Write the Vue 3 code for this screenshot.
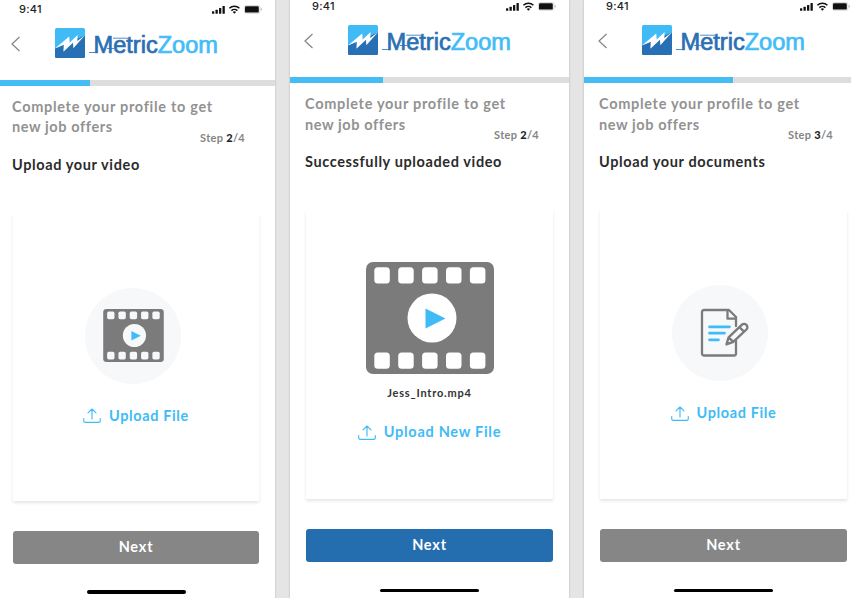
<script setup>
const screens = [
  { id: 'upload', step: 2, progress: 92.5, heading: 'Upload your video', kind: 'video', action: 'Upload File', ready: false },
  { id: 'uploaded', step: 2, progress: 93, heading: 'Successfully uploaded video', kind: 'preview', action: 'Upload New File', ready: true, file: 'Jess_Intro.mp4' },
  { id: 'documents', step: 3, progress: 149, heading: 'Upload your documents', kind: 'document', action: 'Upload File', ready: false },
]
const holes = [0, 1, 2, 3, 4]
</script>

<template>
  <main class="board">
    <section v-for="s in screens" :key="s.id" class="phone" :class="s.id">
      <div class="status">
        <span class="time">9:41</span>
        <svg class="signals" width="52" height="12" viewBox="0 0 52 12">
          <rect x="2" y="8.200" width="2.300" height="2.500" rx=".5" />
          <rect x="5.500" y="6.800" width="2.300" height="3.900" rx=".5" />
          <rect x="9" y="5" width="2.300" height="5.700" rx=".5" />
          <rect x="12.500" y="3" width="2.300" height="7.700" rx=".5" />
          <g fill="none" stroke="#111" stroke-width="1.500">
            <path d="M19.400 5.300a7.200 7.200 0 0 1 10 0" />
            <path d="M21.400 7.600a4.400 4.400 0 0 1 6 0" />
          </g>
          <path d="M22.700 9a2.600 2.600 0 0 1 3.400 0L24.400 10.700z" />
          <rect x="34.400" y="2.600" width="15.600" height="7.600" rx="2" fill="none" stroke="#bbb" stroke-width=".6" />
          <rect x="35" y="3.200" width="13.800" height="6.400" rx="1.200" />
          <path d="M50.800 5.100v2.600q1-.4 1-1.300t-1-1.300z" fill="#aaa" />
        </svg>
      </div>

      <header class="header">
        <svg class="back" width="10" height="16" viewBox="0 0 10 16">
          <path d="M8.500 1 1 8 8.500 15" fill="none" stroke="#858585" stroke-width="1.200" />
        </svg>
        <svg class="logo" width="166" height="32" viewBox="0 0 166 32">
          <rect x="0" y="1" width="30" height="30" rx="1.500" fill="#40bbf6" />
          <path d="M0 21.500 30 8.500V29.500a1.500 1.500 0 0 1-1.500 1.500H1.500A1.500 1.500 0 0 1 0 29.500z" fill="#2870b6" />
          <path d="M0 21.500 14.200 9.500 14.700 15.500 22.600 8 22.300 14 30 8.300 18.300 21.300 18 15.800 8.400 24.800 8.800 17.800z" fill="#fff" />
          <text class="word" x="38.500" y="25.800" textLength="124.500" lengthAdjust="spacingAndGlyphs"><tspan fill="#2b70b3" stroke="#2b70b3">Metric</tspan><tspan fill="#42bdf7" stroke="#42bdf7">Zoom</tspan></text>
          <path d="M34 25.500h7M58 11.200h15M52 21.500h7" stroke="#2b70b3" stroke-width=".8" />
        </svg>
      </header>

      <div class="track"><div class="bar" :style="{ width: s.progress + 'px' }"></div></div>

      <div class="intro">
        <p class="lead"><span class="l1">Complete your profile to get</span><br /><span class="l2">new job offers</span></p>
        <p class="step">Step <b>{{ s.step }}</b>/4</p>
      </div>
      <h1 class="heading">{{ s.heading }}</h1>

      <div class="card" :class="s.kind">
        <div class="art">
          <svg v-if="s.kind !== 'document'" class="film" viewBox="0 0 128 112">
            <rect width="128" height="112" rx="7" fill="#7b7b7b" />
            <g :fill="s.kind === 'video' ? '#f7f8fa' : '#fff'">
              <template v-for="n in holes" :key="n">
                <rect :x="8.300 + n * 23.900" y="5.300" width="15.500" height="16.200" rx="3.500" />
                <rect :x="8.300 + n * 23.900" y="90.500" width="15.500" height="16.200" rx="3.500" />
              </template>
              <circle cx="66" cy="56" r="24.500" />
            </g>
            <path d="M59.500 46.500v20L79.500 56.500z" fill="#40bbf6" />
          </svg>
          <svg v-else class="doc" width="50" height="50" viewBox="0 0 50 50" fill="none" stroke="#7b7b7b" stroke-width="2.300" stroke-linejoin="round" stroke-linecap="round">
            <path d="M37 33v12.500a2 2 0 0 1-2 2H5a2 2 0 0 1-2-2V4a2 2 0 0 1 2-2H30L37 9V18" />
            <path d="M28.500 2.500v8.200H36.500" />
            <path d="M10.500 18.800H30.500M10.500 25.200H25.500M10.500 31.800H19.500" stroke="#40bbf6" stroke-width="2.700" />
            <path d="M27.500 36.300 29.600 29.300 42.700 16.800a3.300 3.300 0 0 1 4.700 4.700L34.300 33.900zM29.600 29.300l4.700 4.600M40.300 19l4.700 4.700" fill="#f7f8fa" stroke-width="2.400" />
          </svg>
        </div>
        <p v-if="s.file" class="file">{{ s.file }}</p>
        <div class="action">
          <svg width="18" height="15" viewBox="0 0 18 15" fill="none" stroke="#40bbf6" stroke-width="1.150" stroke-linecap="round" stroke-linejoin="round">
            <path d="M9 11V1M5 4.800 9 1l4 3.800M.7 10.500v2.200q0 1.600 1.600 1.600h13.400q1.600 0 1.600-1.600V10.500" />
          </svg>
          <span>{{ s.action }}</span>
        </div>
      </div>

      <button class="next" :class="{ ready: s.ready }">Next</button>
      <div class="home"></div>
    </section>
  </main>
</template>

<style>
body { background: #fff; overflow: hidden; }
</style>

<style scoped>
.board {
  display: flex;
  gap: 15px;
  width: 851px;
  height: 598px;
  overflow: hidden;
  background: #e5e5e5;
  font-family: Lato, "Liberation Sans", sans-serif;
}
.phone {
  flex: none;
  box-sizing: border-box;
  width: 279px;
  height: 598px;
  background: #fff;
  box-shadow: 0 0 2px rgba(0, 0, 0, .22);
}
.phone.upload { width: 278px; margin-left: -3px; padding-top: 2.500px; }
p, h1 { margin: 0; }
.status {
  display: flex;
  justify-content: space-between;
  height: 12px;
  padding: 0 13px 0 22px;
}
.time {
  font: 500 11px/12px Inter, sans-serif;
  letter-spacing: .3px;
  color: #222;
}
.signals { display: block; fill: #111; }
.header { display: flex; align-items: center; height: 65px; padding: 0 0 9px 14px; box-sizing: border-box; }
.back { position: relative; top: 1px; }
.logo { margin-left: 34px; }
.word { font: 23px "Liberation Sans", sans-serif; stroke-width: .7px; }
.track { height: 6px; background: #dfdddb; }
.bar { height: 6px; background: #43bdf4; }
.intro {
  display: flex;
  justify-content: space-between;
  align-items: flex-end;
  height: 62px;
  padding: 0 30px 0 15px;
}
.lead {
  align-self: flex-start;
  padding-top: 11px;
  font-size: 14.500px;
  font-weight: 700;
  line-height: 20.500px;
  letter-spacing: .7px;
  white-space: nowrap;
  color: #929292;
}
.l2 { letter-spacing: .6px; }
.step {
  margin-left: -40px;
  font-size: 11px;
  font-weight: 700;
  line-height: 20px;
  letter-spacing: .3px;
  white-space: nowrap;
  color: #858585;
}
.step b { color: #222; font-weight: 900; }
.heading {
  height: 20px;
  margin-top: 7px;
  padding-left: 15px;
  font-size: 14.500px;
  font-weight: 700;
  line-height: 20px;
  letter-spacing: .62px;
  color: #2b2b2b;
}
.card {
  display: flex;
  flex-direction: column;
  align-items: center;
  box-sizing: border-box;
  width: 247px;
  height: 289px;
  margin: 38px 0 0 16px;
  padding-top: 75px;
  background: #fff;
  box-shadow: 0 2px 3px rgba(0, 0, 0, .1);
}
.art {
  display: flex;
  align-items: center;
  justify-content: center;
  width: 96px;
  height: 96px;
  margin-right: 7px;
  border-radius: 50%;
  background: #f7f8fa;
}
.film { width: 61px; height: 53px; margin-left: 1.500px; }
.doc { margin-left: 8px; }
.preview { padding-top: 52px; }
.preview .art { width: 128px; height: 112px; margin: 0; background: none; border-radius: 0; }
.preview .film { width: 128px; height: 112px; margin: 0; }
.file { margin-top: 11px; font-size: 11px; font-weight: 700; line-height: 16px; letter-spacing: .8px; color: #333; }
.action {
  display: flex;
  align-items: center;
  gap: 8px;
  margin: 22px 0 0;
  font-size: 14.500px;
  font-weight: 700;
  line-height: 20px;
  letter-spacing: .62px;
  color: #40bbf6;
}
.preview .action { margin-top: 21px; letter-spacing: .72px; }
.next {
  display: block;
  width: 247px;
  height: 33px;
  margin: 30px 0 0 16px;
  padding: 0 0 2px;
  border: 0;
  border-radius: 3px;
  background: #868686;
  color: #fff;
  font-family: inherit;
  font-size: 14.500px;
  font-weight: 700;
  letter-spacing: .8px;
}
.upload .card { height: 288.500px; width: 246px; }
.upload .next { width: 246px; margin-top: 29.500px; }
.next.ready { background: #246eb0; }
.home { width: 99px; height: 3.500px; margin: 26.500px 0 0 90px; border-radius: 2px; background: #000; }
</style>
